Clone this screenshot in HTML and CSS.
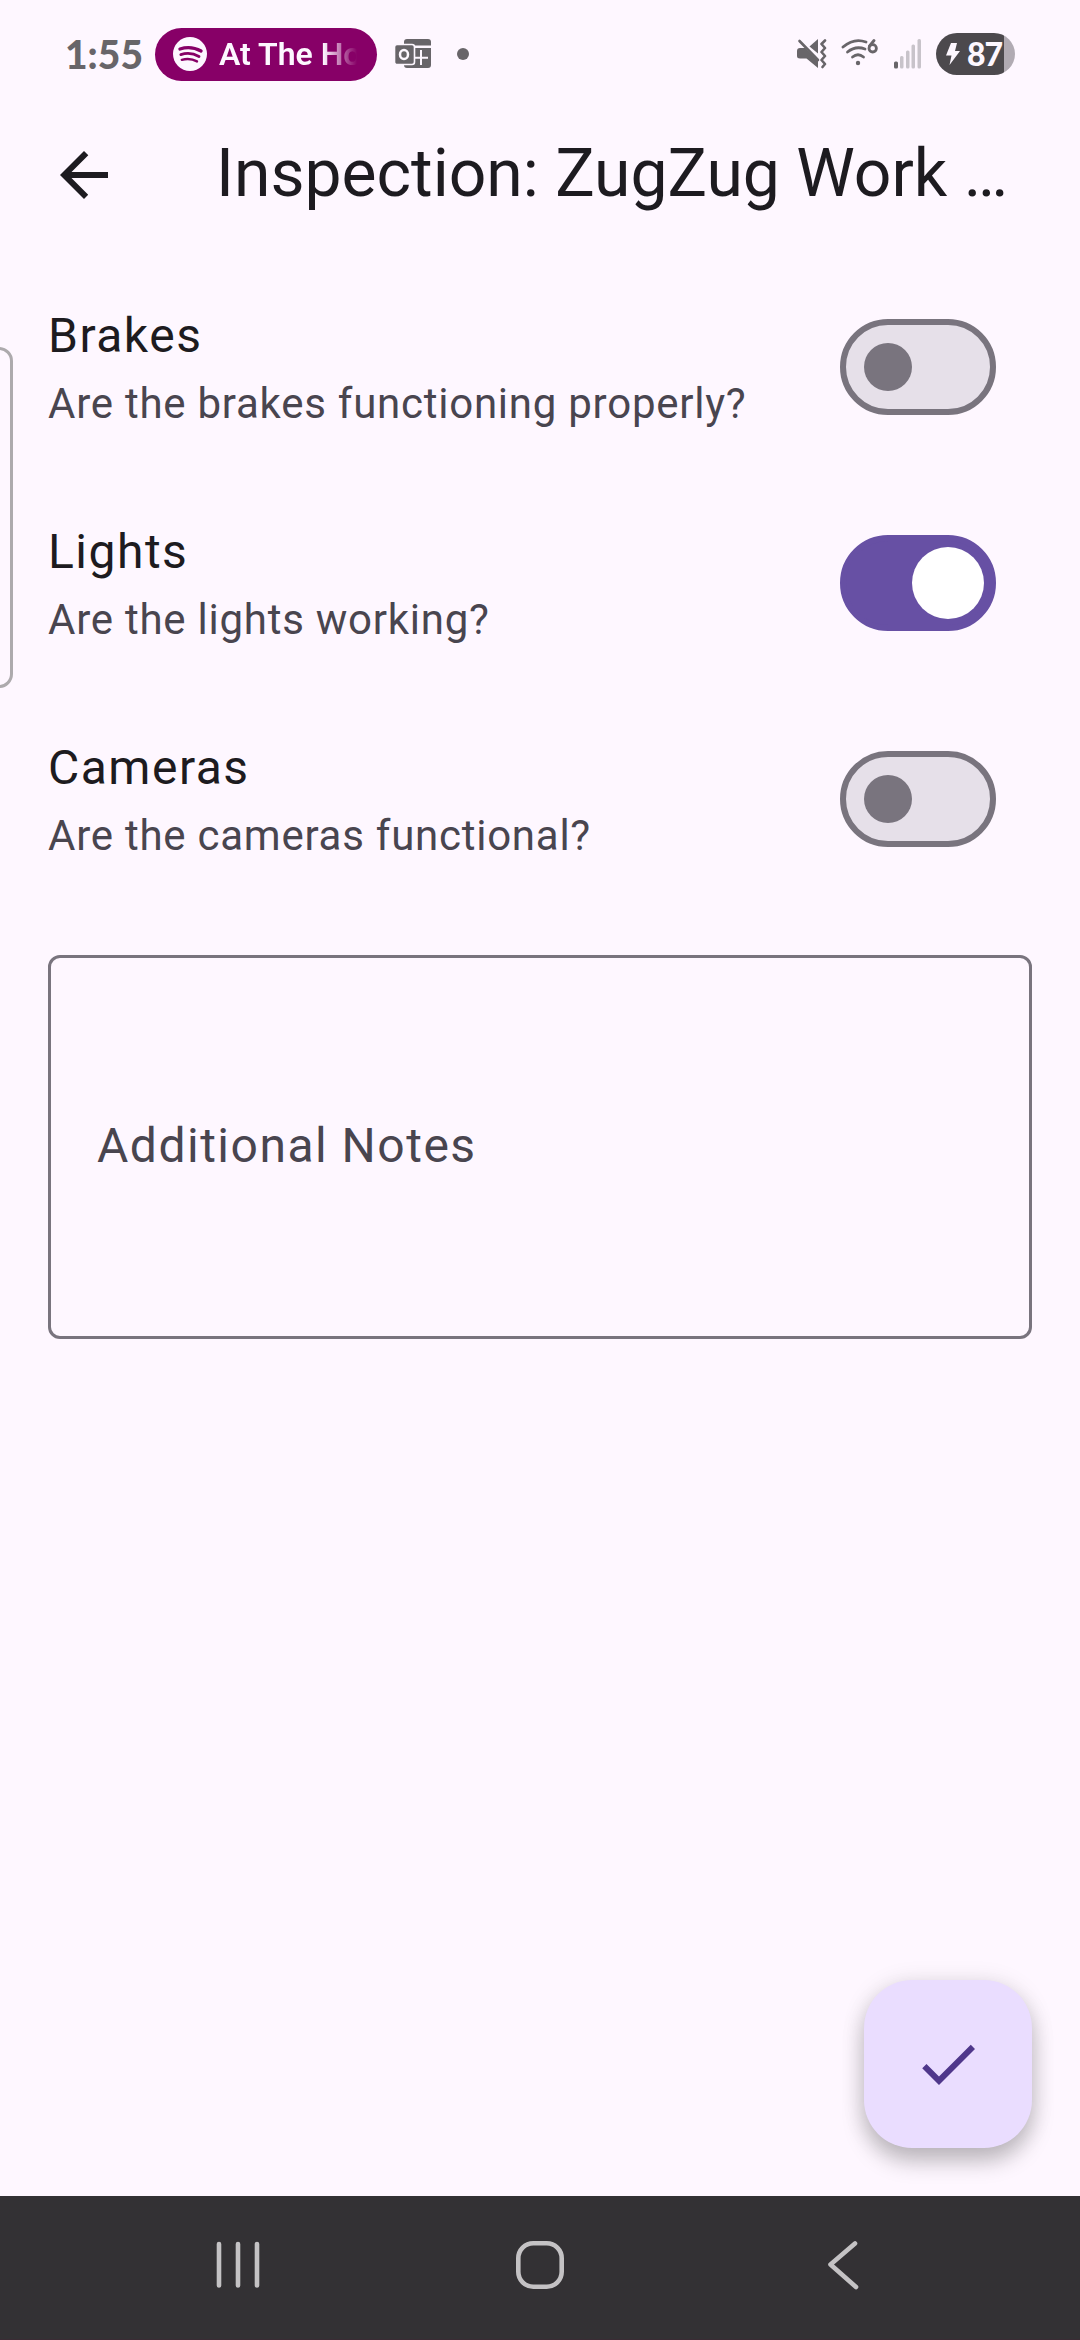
FILE: index.html
```html
<!DOCTYPE html>
<html lang="en">
<head>
<meta charset="utf-8">
<title>Inspection</title>
<link rel="stylesheet" href="styles.css">
</head>
<body>
<div class="screen">
  <header class="status">
    <div class="clock">1:55</div>
    <div class="media-pill">
      <svg class="media-icon" width="34" height="34" viewBox="0 0 34 34" fill="none" stroke="#870067" stroke-linecap="round">
        <circle cx="17" cy="17" r="17" fill="#fdf7ff" stroke="none"/>
        <path d="M7 12 Q18 8.5 28 14" stroke-width="3.4"/>
        <path d="M7.8 17.6 Q17.5 14.6 26 19.5" stroke-width="2.8"/>
        <path d="M8.8 22.8 Q17 20.5 24 24.4" stroke-width="2.4"/>
      </svg>
      <span class="media-title">At The Ho</span>
    </div>
    <svg class="outlook" width="36" height="30" viewBox="0 0 36 30">
      <path d="M9 6.5V3q0-3 3-3H33q3 0 3 3V6.5Z" fill="#686569"/>
      <path d="M20 9H36V26q0 3-3 3H12q-3 0-3-3V25H20Z" fill="#686569"/>
      <path d="M26 11V26M18 18.700H33" stroke="#fdf7ff" stroke-width="2" fill="none"/>
      <rect x="-.5" y="5.500" width="20" height="20" rx="2.500" fill="#686569" stroke="#fdf7ff" stroke-width="1.600"/>
      <ellipse cx="9" cy="15.500" rx="4" ry="4.500" fill="none" stroke="#fdf7ff" stroke-width="2.500"/>
    </svg>
    <span class="dot"></span>
    <span class="spacer"></span>
    <svg class="mute" width="30" height="30" viewBox="0 0 30 30">
      <path d="M0 12Q0 9 3 9H8L21 22V29L9.500 19.500H3Q0 19.500 0 17Z" fill="#686569"/>
      <path d="M12.500 7.500L21 0V14.500Z" fill="#686569"/>
      <path d="M2.500 2L21 21" stroke="#686569" stroke-width="2.600" stroke-linecap="round"/>
      <path d="M28 1.500L24.500 5L28 9L24.500 13L28 17L24.500 21L28 25L25.500 28" fill="none" stroke="#686569" stroke-width="2.600" stroke-linecap="round" stroke-linejoin="round"/>
    </svg>
    <svg class="wifi" width="38" height="28" viewBox="0 0 38 28" fill="none" stroke="#686569" stroke-width="2.800" stroke-linecap="round">
      <path d="M2 8Q13 -1.500 25 3"/>
      <path d="M6.500 13Q14.500 6.500 24 10"/>
      <path d="M11.500 18Q17 13.500 22.500 18"/>
      <circle cx="17" cy="24" r="2.200" fill="#686569" stroke="none"/>
      <path d="M33 1.500L28.500 7"/>
      <circle cx="31.700" cy="9.300" r="3.700"/>
    </svg>
    <svg class="signal" width="28" height="30" viewBox="0 0 28 30" fill="#c8c3ca">
      <rect x="0" y="22.500" width="4" height="7" rx="1.500" fill="#686569"/>
      <rect x="6" y="17" width="3.500" height="12.500" rx="1.500"/>
      <rect x="12" y="11.500" width="3.500" height="18" rx="1.500"/>
      <rect x="17.500" y="5.500" width="3.500" height="24" rx="1.500"/>
      <rect x="23.500" y="0" width="3.500" height="29.500" rx="1.500"/>
    </svg>
    <div class="battery">
      <svg width="14" height="22" viewBox="0 0 14 22"><path d="M5 0H11L9 8H14L3.500 22L5.500 12.500H0Z" fill="#fdf7ff"/></svg>
      <span>87</span>
    </div>
  </header>

  <div class="app-bar">
    <svg class="back" width="48" height="48" viewBox="0 0 48 48"><path d="M48 21H11.500L28.300 4.200L24 0L0 24L24 48L28.200 43.800L11.500 27H48Z" fill="#1d1b20"/></svg>
    <h1>Inspection: ZugZug Work …</h1>
  </div>

  <main class="content">
    <div class="item">
      <div class="label"><div class="name">Brakes</div><div class="question">Are the brakes functioning properly?</div></div>
      <div class="switch"><span class="thumb"></span></div>
    </div>
    <div class="item">
      <div class="label"><div class="name">Lights</div><div class="question">Are the lights working?</div></div>
      <div class="switch on"><span class="thumb"></span></div>
    </div>
    <div class="item">
      <div class="label"><div class="name">Cameras</div><div class="question">Are the cameras functional?</div></div>
      <div class="switch"><span class="thumb"></span></div>
    </div>
    <div class="notes">Additional Notes</div>
  </main>

  <div class="edge-handle"></div>
  <div class="fab">
    <svg width="72" height="72" viewBox="0 0 24 24"><path d="M9 16.170L4.830 12l-1.420 1.410L9 19 21 7l-1.410-1.410z" fill="#4f378b"/></svg>
  </div>

  <nav class="nav">
    <svg width="1080" height="143" viewBox="0 0 1080 143" fill="none" stroke="#c4c2c4" stroke-width="4.600" stroke-linecap="round" stroke-linejoin="round">
      <path d="M219 48V89.500M238 48V89.500M257 48V89.500"/>
      <rect x="518.300" y="47.300" width="43.400" height="43.400" rx="15"/>
      <path d="M855 47.500L830.500 68.500L856 91"/>
    </svg>
  </nav>
</div>
</body>
</html>
```
FILE: styles.css
```css
* { box-sizing: border-box; }
body { margin: 0; font-family: Roboto, sans-serif; }
.screen {
  position: relative;
  display: flex;
  flex-direction: column;
  width: 1080px;
  height: 2340px;
  overflow: hidden;
  background: #fef7ff;
  color: #1d1b20;
}
.status {
  display: flex;
  align-items: center;
  height: 108px;
  padding: 0 65px 0 65px;
  color: #686569;
}
.clock {
  width: 90px;
  font: 900 39px/54px Lato, sans-serif;
  white-space: nowrap;
}
.media-pill {
  display: flex;
  align-items: center;
  width: 222px;
  height: 53px;
  padding-left: 18px;
  border-radius: 27px;
  background: #870067;
  color: #fdf7ff;
}
.media-title {
  width: 150px;
  margin-left: 12px;
  white-space: nowrap;
  font: 600 32px/53px Roboto, sans-serif;
  -webkit-mask-image: linear-gradient(90deg, #000 104px, transparent 138px);
  mask-image: linear-gradient(90deg, #000 104px, transparent 138px);
}
.outlook { margin-left: 18px; overflow: visible; }
.dot { width: 12px; height: 12px; margin-left: 26px; border-radius: 50%; background: #686569; }
.spacer { flex: 1; }
.mute { margin-right: 14px; }
.wifi { margin: 0 15px 2px 0; }
.signal { margin-right: 14px; }
.battery {
  display: flex;
  align-items: center;
  gap: 7px;
  width: 79px;
  height: 42px;
  padding-left: 10px;
  border-radius: 21px;
  background: linear-gradient(90deg, #4c494d 68px, #b1abb3 68px);
  color: #fdf7ff;
  font: 900 32px/42px Lato, sans-serif;
  letter-spacing: -1px;
}
.app-bar {
  display: flex;
  align-items: center;
  height: 134px;
  padding: 0 60px;
}
.app-bar h1 {
  margin: 0 0 3px 108px;
  font-size: 66px;
  font-weight: 400;
  line-height: 84px;
  white-space: nowrap;
}
.content { flex: 1; padding: 17px 48px 0; }
.item {
  display: flex;
  align-items: center;
  justify-content: space-between;
  height: 216px;
  padding-right: 36px;
}
.name { font-size: 48px; line-height: 70px; letter-spacing: 1.5px; }
.question { padding-top: 3px; color: #49454f; font-size: 42px; line-height: 59px; letter-spacing: .75px; }
.switch {
  display: flex;
  align-items: center;
  width: 156px;
  height: 96px;
  padding-left: 18px;
  border: 6px solid #79747e;
  border-radius: 48px;
  background: #e6e0e9;
}
.thumb { width: 48px; height: 48px; border-radius: 50%; background: #79747e; }
.switch.on { padding-left: 66px; border-color: #6750a4; background: #6750a4; }
.switch.on .thumb { width: 72px; height: 72px; background: #fff; }
.notes {
  display: flex;
  align-items: center;
  height: 384px;
  margin-top: 48px;
  padding: 0 0 2px 46px;
  border: 3px solid #79747e;
  border-radius: 12px;
  color: #49454f;
  font-size: 48px;
  line-height: 72px;
  letter-spacing: 1.5px;
}
.edge-handle {
  position: absolute;
  left: -20px;
  top: 347px;
  width: 33px;
  height: 341px;
  border: 3px solid #adaaad;
  border-radius: 14px;
}
.fab {
  position: absolute;
  left: 864px;
  top: 1980px;
  display: flex;
  align-items: center;
  justify-content: center;
  width: 168px;
  height: 168px;
  border-radius: 48px;
  background: #eaddff;
  box-shadow: 0 14px 22px rgba(0, 0, 0, .22), 0 2px 24px rgba(0, 0, 0, .11);
}
.nav { height: 144px; background: #333134; border-bottom: 1px solid #3a2b34; }
.nav svg { display: block; }
```
